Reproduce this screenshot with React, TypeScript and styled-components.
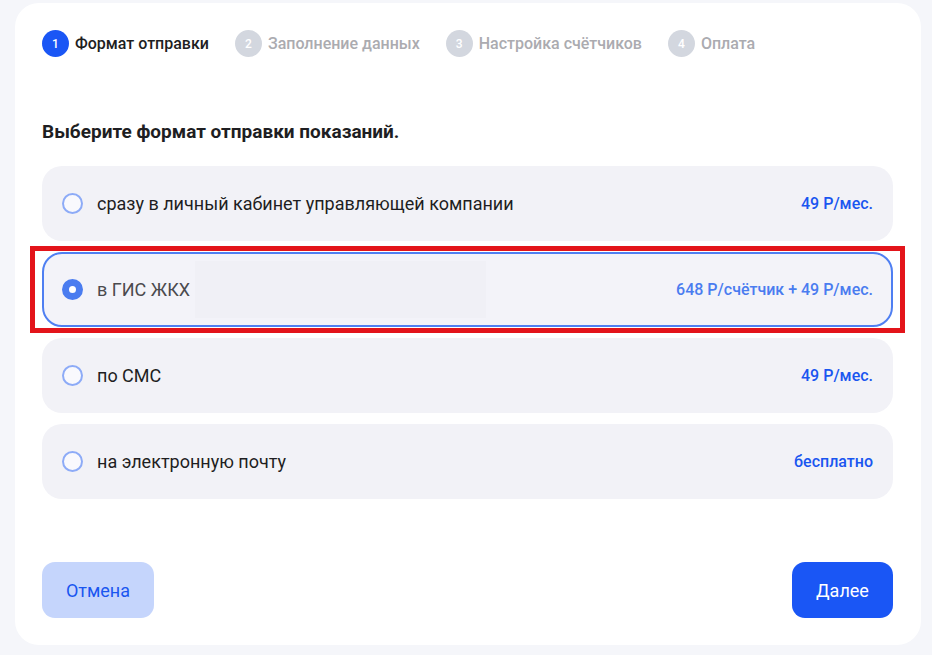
import React, { useState } from "react";
import styled, { createGlobalStyle, css } from "styled-components";

const GlobalStyle = createGlobalStyle`
  body {
    margin: 0;
    background: #f5f6fa;
    font-family: Roboto, "Noto Sans", sans-serif;
  }
`;

const steps = ["Формат отправки", "Заполнение данных", "Настройка счётчиков", "Оплата"];

const options = [
  { label: "сразу в личный кабинет управляющей компании", price: "49 Р/мес." },
  { label: "в ГИС ЖКХ", price: "648 Р/счётчик + 49 Р/мес.", highlighted: true },
  { label: "по СМС", price: "49 Р/мес." },
  { label: "на электронную почту", price: "бесплатно" },
];

export default function App() {
  const [selected, setSelected] = useState(1);

  return (
    <>
      <GlobalStyle />
      <Card>
        <Steps>
          {steps.map((s, i) => (
            <Step key={s}>
              <StepNum $active={i === 0}>{i + 1}</StepNum>
              <StepLabel $active={i === 0}>{s}</StepLabel>
            </Step>
          ))}
        </Steps>

        <Heading>Выберите формат отправки показаний.</Heading>

        <OptionList>
          {options.map((o, i) => (
            <Option
              key={o.label}
              $selected={i === selected}
              $highlighted={!!o.highlighted}
              onClick={() => setSelected(i)}
            >
              <Radio $checked={i === selected} />
              <OptionLabel $selected={i === selected}>{o.label}</OptionLabel>
              {o.highlighted && <Ghost />}
              <Price $selected={i === selected}>{o.price}</Price>
            </Option>
          ))}
        </OptionList>

        <Footer>
          <CancelButton>Отмена</CancelButton>
          <NextButton>Далее</NextButton>
        </Footer>
      </Card>
    </>
  );
}

const Card = styled.div`
  margin: 3px 11px 10px 15px;
  background: #ffffff;
  border-radius: 24px;
  padding: 27px 28px 27px 27px;
  display: flex;
  flex-direction: column;
`;

const Steps = styled.div`
  display: flex;
  align-items: center;
  gap: 26px;
`;

const Step = styled.div`
  display: flex;
  align-items: center;
  gap: 6px;
`;

const StepNum = styled.div<{ $active: boolean }>`
  width: 27px;
  height: 27px;
  border-radius: 50%;
  background: ${(p) => (p.$active ? "#1a56f5" : "#d3d7df")};
  color: #ffffff;
  font-size: 12px;
  font-weight: 500;
  display: flex;
  align-items: center;
  justify-content: center;
`;

const StepLabel = styled.div<{ $active: boolean }>`
  font-size: 16px;
  font-weight: 500;
  color: ${(p) => (p.$active ? "#1e1e22" : "#ababb0")};
`;

const Heading = styled.h2`
  margin: 64px 0 23px;
  font-size: 19px;
  line-height: 22px;
  font-weight: 700;
  color: #1e1e22;
`;

const OptionList = styled.div`
  display: flex;
  flex-direction: column;
  gap: 11px;
`;

const Option = styled.div<{ $selected: boolean; $highlighted: boolean }>`
  position: relative;
  height: 75px;
  box-sizing: border-box;
  display: flex;
  align-items: center;
  padding: 0 18px;
  border-radius: 20px;
  background: ${(p) => (p.$selected ? "#f3f3f9" : "#f2f2f7")};
  border: 2px solid ${(p) => (p.$selected ? "#4f7ff2" : "transparent")};
  cursor: pointer;

  ${(p) =>
    p.$highlighted &&
    css`
      &::after {
        content: "";
        position: absolute;
        left: -14px;
        right: -14px;
        top: -8px;
        bottom: -8px;
        border: 5px solid #e3141a;
        pointer-events: none;
      }
    `}
`;

const Radio = styled.span<{ $checked: boolean }>`
  width: 21px;
  height: 21px;
  box-sizing: border-box;
  border-radius: 50%;
  flex-shrink: 0;
  ${(p) =>
    p.$checked
      ? css`
          background: #ffffff;
          border: 7px solid #4a7cf0;
        `
      : css`
          background: #f9f9fd;
          border: 2.5px solid #8dabf7;
        `}
`;

const OptionLabel = styled.span<{ $selected: boolean }>`
  margin-left: 14px;
  font-size: 18px;
  color: ${(p) => (p.$selected ? "#4a4a4e" : "#1e1e22")};
`;

const Ghost = styled.span`
  width: 291px;
  height: 57px;
  margin-left: 5px;
  background: #f0f0f6;
`;

const Price = styled.span<{ $selected: boolean }>`
  margin-left: auto;
  font-size: 16px;
  font-weight: 500;
  color: ${(p) => (p.$selected ? "#4a7cf0" : "#1a56f0")};
`;

const Footer = styled.div`
  margin-top: 63px;
  display: flex;
  justify-content: space-between;
`;

const BaseButton = styled.button`
  height: 56px;
  border: none;
  border-radius: 13px;
  font-family: Roboto, "Noto Sans", sans-serif;
  font-size: 18px;
  padding: 0;
  cursor: pointer;
`;

const CancelButton = styled(BaseButton)`
  width: 112px;
  background: #c5d5fc;
  color: #1a56f0;
`;

const NextButton = styled(BaseButton)`
  width: 101px;
  background: #1a56f5;
  color: #ffffff;
`;
